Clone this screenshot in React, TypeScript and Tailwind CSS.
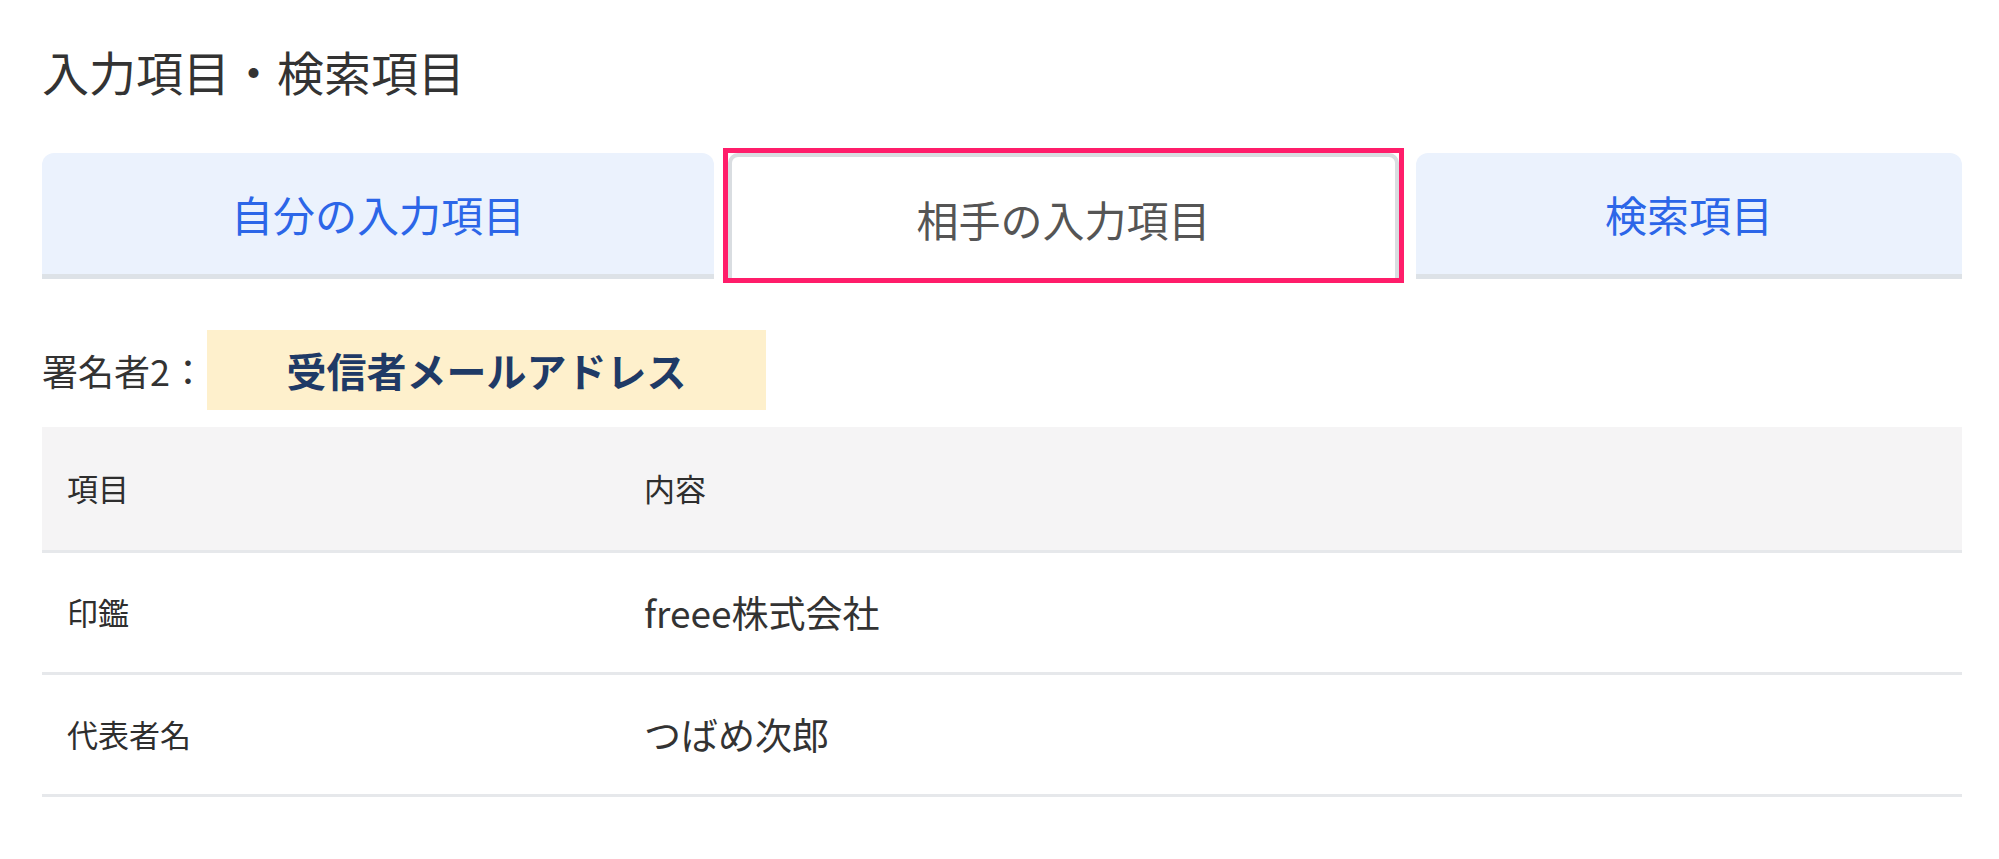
import React from 'react';

const font = { fontFamily: '"Noto Sans CJK JP", "Noto Sans", sans-serif' };

const rows = [
  { label: '印鑑', value: 'freee株式会社' },
  { label: '代表者名', value: 'つばめ次郎' },
];

function Tab({ label, className }: { label: string; className: string }) {
  return (
    <div
      className={`flex h-[126px] items-center justify-center rounded-t-[12px] border-b-[5px] border-[#dde2e7] bg-[#ebf2fd] text-[42px] text-[#2c66e8] ${className}`}
    >
      {label}
    </div>
  );
}

export default function App() {
  return (
    <div className="h-[859px] w-[1999px] bg-white pl-[42px] pr-[37px] text-[#333]" style={font}>
      <h1 className="pt-[47px] text-[47px] leading-none font-normal text-[#333]">入力項目・検索項目</h1>

      {/* tabs */}
      <div className="mt-[59px] flex items-end">
        <Tab label="自分の入力項目" className="w-[672px]" />
        <div className="relative ml-[14px] w-[671px]">
          <div className="flex h-[126px] items-center justify-center rounded-t-[10px] border-[4px] border-b-0 border-[#d9dde1] bg-white text-[42px] text-[#555]">
            相手の入力項目
          </div>
          <div className="absolute -top-[5px] -right-[5px] -bottom-[4px] -left-[5px] border-[5px] border-[#ff1d6a]" />
        </div>
        <Tab label="検索項目" className="ml-[17px] w-[546px]" />
      </div>

      {/* signer */}
      <div className="mt-[51px] flex h-[80px] items-center">
        <span className="w-[165px] text-[36px] leading-none">署名者2：</span>
        <div className="flex h-[80px] w-[559px] items-center justify-center bg-[#fef0cc] text-[40px] font-bold text-[#1f3a66]">
          受信者メールアドレス
        </div>
      </div>

      {/* table */}
      <div className="mt-[17px]">
        <div className="grid h-[126px] grid-cols-[602px_1fr] items-center border-b-[3px] border-[#e6e8eb] bg-[#f5f4f5] text-[31px] text-[#2e2e2e]">
          <span className="pl-[25px]">項目</span>
          <span>内容</span>
        </div>
        {rows.map((r) => (
          <div
            key={r.label}
            className="grid h-[122px] grid-cols-[602px_1fr] items-center border-b-[3px] border-[#e6e8eb]"
          >
            <span className="pl-[25px] text-[31px] text-[#2e2e2e]">{r.label}</span>
            <span className="text-[37px]">{r.value}</span>
          </div>
        ))}
      </div>
    </div>
  );
}
